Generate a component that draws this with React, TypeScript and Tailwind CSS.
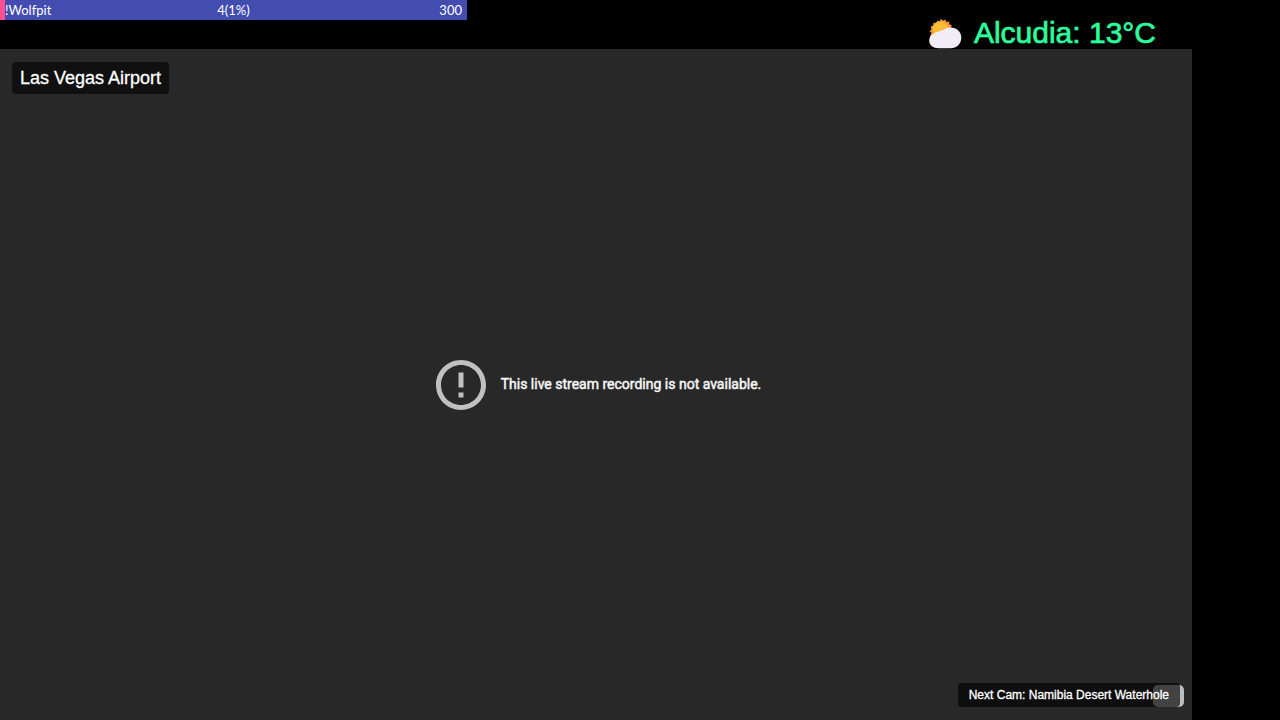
function GoalBar() {
  return (
    <section
      aria-label="Goal progress"
      className="flex h-5 w-[467px] bg-[#434db0] font-[Lato,sans-serif] text-[13px] leading-5 text-white"
    >
      <div className="w-[5px] bg-[#ff4f93]" />
      <div className="grid flex-1 grid-cols-3 pr-[5px]">
        <span>!Wolfpit</span>
        <span className="text-center">4(1%)</span>
        <span className="text-right">300</span>
      </div>
    </section>
  );
}

function PartlyCloudyIcon() {
  return (
    <svg viewBox="0 0 34 32" className="h-8 w-[34px]" aria-hidden="true">
      <path
        d="M13 1.800l1.800 2 2.600-1.400 1 2.500 2.800-.4.1 2.800 2.500 1-1 2.500 1.600 2-2 2-14 6-5-.2-1.100-2.200 1.300-2.300-2-1.900 1.900-2-.8-2.700 2.600-.9.1-2.800 2.800.3 1.100-2.500 2.300 1.200z"
        fill="#f5972c"
      />
      <circle cx="12.500" cy="12" r="7.800" fill="#fdbc38" />
      <path
        d="M10.500 31.200C5.200 31.200 1.200 28.400 1.200 23.800c0-4.200 2.600-7.400 7.200-8.600 3.600-1 5.600-1.800 8.200-3.200 2.300-1.300 4.500-1.900 7-1.500 5.700.7 9.700 4.700 9.700 10 0 6.200-4.300 10.700-10.800 10.700z"
        fill="#f1ecf5"
      />
    </svg>
  );
}

function Weather() {
  return (
    <div className="flex items-end gap-3 pr-[124px]">
      <PartlyCloudyIcon />
      <p className="text-[30px] leading-8 text-[#2dfc9c] [-webkit-text-stroke:0.7px_#2dfc9c]">Alcudia: 13°C</p>
    </div>
  );
}

function ErrorIcon() {
  return (
    <svg viewBox="0 0 24 24" className="size-[60px] shrink-0" fill="#c0c0c0" aria-hidden="true">
      <path d="M11 15h2v2h-2zm0-8h2v6h-2zm.99-5C6.470 2 2 6.480 2 12s4.470 10 9.990 10C17.520 22 22 17.520 22 12S17.520 2 11.990 2zM12 20c-4.420 0-8-3.580-8-8s3.580-8 8-8 8 3.580 8 8-3.580 8-8 8z" />
    </svg>
  );
}

function Player() {
  return (
    <main className="grid flex-1 grid-rows-[1fr_auto_1fr] bg-[#282828]">
      <h1 className="ml-3 mt-[13px] self-start justify-self-start rounded bg-[#101010] px-2 text-lg leading-8 text-white [-webkit-text-stroke:0.3px_#fff]">
        Las Vegas Airport
      </h1>
      <div role="alert" className="flex items-center justify-center gap-[10px]">
        <ErrorIcon />
        <p className="pb-px font-[Roboto,sans-serif] text-sm text-[#f4f4f4] [-webkit-text-stroke:0.5px_#f4f4f4]">
          This live stream recording is not available.
        </p>
      </div>
      <div className="relative mb-[13px] mr-3 self-end justify-self-end">
        <div className="absolute -right-1 bottom-0 h-[22px] w-[31px] rounded-[5px] bg-[#bdbdbd]" />
        <p className="relative rounded bg-black/65 px-[11px] text-xs leading-6 text-white [-webkit-text-stroke:0.3px_#fff]">
          Next Cam: Namibia Desert Waterhole
        </p>
      </div>
    </main>
  );
}

export default function App() {
  return (
    <div className="flex min-h-screen flex-col bg-black font-['Liberation_Sans',Arial,sans-serif]">
      <header className="flex h-[49px] justify-between">
        <GoalBar />
        <Weather />
      </header>
      <div className="flex flex-1 pr-[88px]">
        <Player />
      </div>
    </div>
  );
}
